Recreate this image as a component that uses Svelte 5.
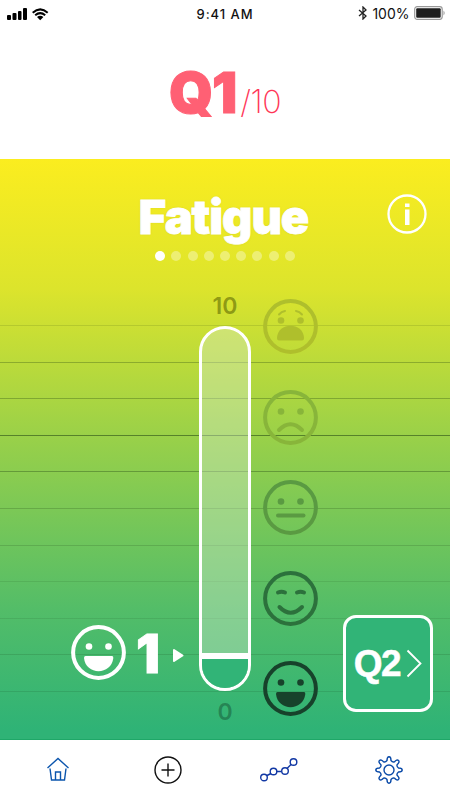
<script lang="ts">
  type Mood = 'awful' | 'sad' | 'neutral' | 'good' | 'great';

  const moods: { mood: Mood; tone: string }[] = [
    { mood: 'awful', tone: 't1' },
    { mood: 'sad', tone: 't2' },
    { mood: 'neutral', tone: 't3' },
    { mood: 'good', tone: 't4' },
    { mood: 'great', tone: 't5' }
  ];

  // Strength of every scale line, from 10 down to 0
  const lines = [0.12, 0.28, 0.28, 0.5, 0.32, 0.2, 0.16, 0.11, 0.1, 0.15, 0.12];

  const total = 9;
  let current = $state(0);
</script>

{#snippet face(mood: Mood)}
  <svg class="face" viewBox="0 0 55 55" width="55" height="55">
    <g fill="none" stroke="currentColor" stroke-width="4" stroke-linecap="round">
      <circle cx="27.5" cy="27.5" r="25.4" />
      {#if mood === 'awful'}
        <path d="M16 15.500 Q18.500 12.500 22 12 M33 12 Q36.500 12.500 39 15.500" stroke-width="2" />
      {:else if mood === 'sad'}
        <path d="M16 40 Q27.500 28.500 39 40" />
      {:else if mood === 'neutral'}
        <path d="M15 35.500 H40.500" />
      {:else if mood === 'good'}
        <path d="M15 21.500 Q18.500 20 22 21.500 M34 21.500 Q37.500 20 41 21.500" />
        <path d="M16.500 36 Q27.500 47.500 39 36" />
      {/if}
    </g>
    <g fill="currentColor">
      {#if mood !== 'good'}
        <circle cx="18" cy="21.500" r="3.300" />
        <circle cx="37.500" cy="21.500" r="3.300" />
      {/if}
      {#if mood === 'awful'}
        <path d="M14 39 C14.500 22.500 40.500 22.500 41 39 Q41 41.500 39 41.500 H16 Q14 41.500 14 39Z" />
      {:else if mood === 'great'}
        <path d="M14.500 31 H41 Q42.500 31 42.300 33 C40.500 50.500 14.500 50.500 13 33 Q13 31 14.500 31Z" />
      {/if}
    </g>
  </svg>
{/snippet}

<div class="screen">
  <div class="status">
    <div class="signal">
      <svg width="50" height="16" viewBox="0 0 50 16">
        <g fill="#000">
          <rect x="7" y="10" width="4" height="5" rx="1" />
          <rect x="12.500" y="8" width="4" height="7" rx="1" />
          <rect x="18" y="6" width="3.500" height="9" rx="1" />
          <rect x="23" y="3" width="4" height="12" rx="1" />
          <path d="M37 12 L40.200 15.300 L43.400 12 Q40.200 9.700 37 12Z" />
        </g>
        <path
          d="M32.700 7.700 Q40.200 1 47.700 7.700 M35.200 10.300 Q40.200 6 45.200 10.300"
          fill="none"
          stroke="#000"
          stroke-width="2"
        />
      </svg>
    </div>
    <span class="clock">9:41 AM</span>
    <div class="power">
      <svg width="10" height="14" viewBox="0 0 10 14">
        <path d="M1 4 L8 10 L5 13 V1 L8 4 L1 10" fill="none" stroke="#222" stroke-width="1.300" />
      </svg>
      <span>100%</span>
      <svg width="32" height="14" viewBox="0 0 32 14">
        <rect x="0.700" y="0.700" width="27.500" height="12.600" rx="2.500" fill="none" stroke="#999" stroke-width="1.200" />
        <rect x="2.200" y="2.200" width="24.500" height="9.600" rx="1" fill="#1e1e1e" />
        <path d="M29.500 4.500 Q31.800 7 29.500 9.500Z" fill="#999" />
      </svg>
    </div>
  </div>

  <header>
    <span class="question">Q1</span><span class="of">/10</span>
  </header>

  <main>
    <div class="lines">
      {#each lines as strength}
        <i style="opacity: {strength}"></i>
      {/each}
    </div>

    <div class="content">
      <div class="title">
        <h1>Fatigue</h1>
        <button class="info" aria-label="Info">
          <svg width="40" height="40" viewBox="0 0 40 40">
            <circle cx="20" cy="20" r="18.500" fill="none" stroke="#fff" stroke-width="2.300" />
            <path d="M18 9.500 H22.500 V13 H18Z M18 15.500 H22.500 V31 H18Z" fill="#fff" />
          </svg>
        </button>
      </div>

      <div class="dots">
        {#each Array(total) as _, i}
          <span class:active={i === current}></span>
        {/each}
      </div>

      <div class="scale">
        <div class="readout">
          {@render face('great')}
          <span class="score">1</span>
          <svg class="pointer" width="11" height="15" viewBox="0 0 11 15">
            <path d="M1 2 L9.500 7.500 L1 13Z" fill="#fff" stroke="#fff" stroke-width="2" stroke-linejoin="round" />
          </svg>
        </div>

        <div class="meter">
          <span>10</span>
          <div class="tube"><div class="fill"></div></div>
          <span class="zero">0</span>
        </div>

        <div class="faces">
          {#each moods as { mood, tone }}
            <div class={tone}>{@render face(mood)}</div>
          {/each}
        </div>

        <button class="next">
          <span>Q2</span>
          <svg width="16" height="29" viewBox="0 0 16 29">
            <path d="M1.500 1.500 L14.500 14.500 L1.500 27.500" fill="none" stroke="#fff" stroke-width="1.800" />
          </svg>
        </button>
      </div>
    </div>
  </main>

  <nav>
    <svg width="24" height="28" viewBox="0 0 24 28" stroke="#0b55ad">
      <path d="M1.500 12 L12 2.500 L22.500 12 M4 12.500 L5.500 24 H18.500 L20 12.500 M9.500 24 V16 H14.500 V24" />
    </svg>
    <svg width="28" height="28" viewBox="0 0 28 28" stroke="#111">
      <circle cx="14" cy="14" r="13" />
      <path d="M14 7.500 V20.500 M7.500 14 H20.500" />
    </svg>
    <svg width="38" height="28" viewBox="0 0 38 28" stroke="#1238a4">
      <path d="M7 19.500 L11 17.500 M16.500 15.500 H21.500 M27 12.500 L31 8.500" />
      <circle cx="4" cy="21.500" r="3.300" />
      <circle cx="13.500" cy="15.500" r="3.300" />
      <circle cx="25" cy="15" r="3.300" />
      <circle cx="33.500" cy="6" r="3.300" />
    </svg>
    <svg width="28" height="28" viewBox="0 0 28 28" stroke="#0a4aa8">
      <circle cx="14" cy="14" r="5" />
      <path
        d="M12 4.500 Q12 .8 14 .8 Q16 .8 16 4.500 Q17.500 6.500 19.300 5.900 Q22 3 23.500 4.500 Q25 6 22.100 8.700 Q21.500 10.500 23.500 12 Q27.200 12 27.200 14 Q27.200 16 23.500 16 Q21.500 17.500 22.100 19.300 Q25 22 23.500 23.500 Q22 25 19.300 22.100 Q17.500 21.500 16 23.500 Q16 27.200 14 27.200 Q12 27.200 12 23.500 Q10.500 21.500 8.700 22.100 Q6 25 4.500 23.500 Q3 22 5.900 19.300 Q6.500 17.500 4.500 16 Q.8 16 .8 14 Q.8 12 4.500 12 Q6.500 10.500 5.900 8.700 Q3 6 4.500 4.500 Q6 3 8.700 5.900 Q10.500 6.500 12 4.500Z"
      />
    </svg>
  </nav>
</div>

<style>
  :global(body) {
    margin: 0;
  }

  .screen {
    width: 450px;
    height: 800px;
    display: flex;
    flex-direction: column;
    overflow: hidden;
    background: #fff;
    font-family: Inter, 'Liberation Sans', sans-serif;
  }

  button {
    background: none;
    border: 0;
    padding: 0;
    color: inherit;
  }

  svg {
    display: block;
    flex: none;
  }

  .status {
    height: 28px;
    display: grid;
    grid-template-columns: 1fr auto 1fr;
    align-items: center;
    box-sizing: border-box;
    padding: 0 4px 0 0;
    font-size: 13px;
    color: #111;
  }

  .signal {
    margin-top: -1px;
    padding-bottom: 2px;
  }

  .clock {
    font-weight: 500;
    letter-spacing: 0.95px;
    margin-left: 4px;
  }

  .power {
    display: flex;
    align-items: center;
    justify-content: flex-end;
    gap: 4.5px;
    margin-top: -2px;
    font-size: 14px;
  }

  header {
    height: 131px;
    display: flex;
    align-items: baseline;
    justify-content: center;
    line-height: 131px;
    color: #ff6074;
  }

  .question {
    font-size: 56px;
    font-weight: 900;
    letter-spacing: -1px;
    -webkit-text-stroke: 1px #ff6074;
  }

  .of {
    font-size: 32px;
    font-weight: 200;
    letter-spacing: -0.5px;
    margin-left: 4px;
    color: #ff3657;
  }

  main {
    height: 580px;
    display: grid;
    border-bottom: 1px solid #1fa768;
    background: linear-gradient(#fbed1f 0, #dce42c 130px, #94cf4b 290px, #53bd68 450px, #2fb376 570px);
    color: #fff;
  }

  .lines,
  .content {
    grid-area: 1 / 1;
  }

  .lines {
    display: flex;
    flex-direction: column;
    gap: 35.6px;
    padding-top: 166px;
  }

  .lines i {
    height: 1px;
    background: #12330c;
  }

  .content {
    z-index: 1;
  }

  .title {
    height: 91px;
    display: grid;
    grid-template-columns: 1fr auto 1fr;
    padding: 0 23px 0 20px;
  }

  h1 {
    grid-column: 2;
    margin: 0;
    padding-top: 28px;
    font-size: 47px;
    line-height: 60px;
    font-weight: 900;
    letter-spacing: -1.1px;
    -webkit-text-stroke: 0.8px #fff;
    text-shadow: 0 0 2px rgba(150, 150, 0, 0.35);
  }

  .info {
    justify-self: end;
    align-self: start;
    margin-top: 35px;
  }

  .dots {
    height: 43px;
    display: flex;
    justify-content: center;
    gap: 6.2px;
  }

  .dots span {
    width: 10px;
    height: 10px;
    margin-top: 0.5px;
    border-radius: 50%;
    background: rgba(255, 255, 255, 0.35);
  }

  .dots .active {
    background: #fff;
  }

  .scale {
    display: grid;
    grid-template-columns: 199px 52px 92px 90px;
    height: 447px;
  }

  .readout {
    align-self: end;
    height: 55px;
    margin-bottom: 60px;
    display: flex;
    align-items: center;
    padding-left: 71px;
  }

  .score {
    width: 37px;
    margin-left: 10px;
    padding-top: 4px;
    font-size: 53px;
    line-height: 55px;
    font-weight: 900;
    -webkit-text-stroke: 0.8px #fff;
  }

  .pointer {
    margin: 6px 0 0;
  }

  .meter {
    display: flex;
    flex-direction: column;
    align-items: center;
    font-size: 23px;
    line-height: 26px;
    font-weight: 600;
    color: rgba(90, 100, 0, 0.58);
  }

  .meter .zero {
    color: rgba(20, 80, 50, 0.48);
  }

  .tube {
    width: 52px;
    height: 365px;
    margin: 7px 0 8px;
    box-sizing: border-box;
    border: 3px solid #fff;
    border-radius: 26px;
    overflow: hidden;
    display: flex;
    align-items: flex-end;
    background: rgba(214, 235, 208, 0.4);
    background-clip: padding-box;
  }

  .fill {
    flex: 1;
    height: 29px;
    border-top: 6px solid #fff;
    background: #31b477;
  }

  .faces {
    padding: 6px 0 0 12px;
    display: flex;
    flex-direction: column;
    gap: 35.6px;
  }

  .t1 {
    color: #afbf2c;
  }
  .t2 {
    color: #88b53a;
  }
  .t3 {
    color: #5a9a42;
  }
  .t4 {
    color: #2c713c;
  }
  .t5 {
    color: #17422b;
  }

  .next {
    align-self: end;
    width: 90px;
    height: 97px;
    margin-bottom: 28px;
    box-sizing: border-box;
    border: 3px solid #fff;
    border-radius: 13px;
    background: #31b477;
    display: flex;
    align-items: center;
    justify-content: center;
    gap: 6px;
    font: bold 37px 'Liberation Sans', sans-serif;
    letter-spacing: -1.5px;
    -webkit-text-stroke: 0.5px #fff;
  }

  nav {
    height: 59px;
    display: grid;
    grid-template-columns: repeat(4, 110.5px);
    justify-content: center;
    align-items: center;
    justify-items: center;
    padding-right: 3px;
    fill: none;
    stroke-width: 1.4;
  }
</style>
